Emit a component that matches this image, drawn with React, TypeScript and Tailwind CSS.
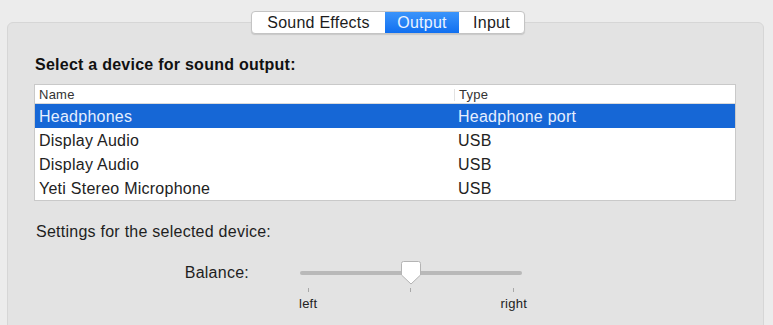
import React from "react";

const devices = [
  { name: "Headphones", type: "Headphone port", selected: true },
  { name: "Display Audio", type: "USB" },
  { name: "Display Audio", type: "USB" },
  { name: "Yeti Stereo Microphone", type: "USB" },
];

export default function App() {
  return (
    <div
      className="relative h-[325px] w-[773px] overflow-hidden bg-[#ececec] px-[7px] pt-[22px] tracking-[0.25px] text-[#222]"
      style={{ fontFamily: '"Liberation Sans", Arial, sans-serif' }}
    >
      {/* tab bar */}
      <div className="absolute left-[251px] top-[11px] z-10 flex h-[23px] overflow-hidden rounded-[4px] border border-[#c4c4c4] bg-white text-[16px] leading-[21px] shadow-[0_1px_1px_rgba(0,0,0,0.12)]">
        <div className="flex w-[133px] items-center justify-center text-[#1c1c1c]">Sound Effects</div>
        <div className="flex w-[74px] items-center justify-center bg-gradient-to-b from-[#3a94fb] to-[#0f6ff0] text-[#eaf3ff]">
          Output
        </div>
        <div className="flex w-[65px] items-center justify-center text-[#1c1c1c]">Input</div>
      </div>

      {/* panel */}
      <div className="h-[320px] w-[757px] rounded-[6px] border border-[#d6d6d6] bg-[#e3e3e3] pt-[33px]">
        <div className="pl-[27px] text-[16px] font-bold leading-[18px] text-[#111]">
          Select a device for sound output:
        </div>

        <div className="ml-[26px] mt-[10px] w-[702px] border border-[#c9c9c9] bg-white">
          <div className="flex h-[19px] items-center border-b border-[#dadada] pt-[2px] text-[13px] text-[#333]">
            <div className="w-[419px] pl-[4px]">Name</div>
            <div className="h-[12px] w-px bg-[#e2e2e2]" />
            <div className="pl-[4px]">Type</div>
          </div>
          {devices.map((d, i) => (
            <div
              key={i}
              className={
                "flex h-[24px] items-center pt-[2px] text-[16px] " +
                (d.selected ? "bg-[#1667d6] text-[#e6efff]" : "text-[#222]")
              }
            >
              <div className="w-[420px] pl-[4px]">{d.name}</div>
              <div className="pl-[3px]">{d.type}</div>
            </div>
          ))}
        </div>

        <div className="mt-[22px] pl-[28px] text-[16px] leading-[18px] text-[#1e1e1e]">
          Settings for the selected device:
        </div>

        <div className="mt-[23px] flex items-start">
          <div className="w-[241px] text-right text-[16px] leading-[18px] text-[#1e1e1e]">Balance:</div>
          <div className="ml-[51px] w-[222px]">
            <div className="relative h-[18px]">
              <div className="absolute left-0 right-0 top-[7px] h-[4px] rounded-full bg-[#b9b9b9]" />
              <svg
                className="absolute left-[101px] top-[-3px]"
                width="20"
                height="24"
                viewBox="0 0 20 24"
              >
                <path
                  d="M2.5 0.5 H17.5 A2 2 0 0 1 19.5 2.5 V14 L10 23 L0.5 14 V2.5 A2 2 0 0 1 2.5 0.5 Z"
                  fill="#ffffff"
                  stroke="#b4b4b4"
                />
              </svg>
            </div>
            <div className="relative mt-[6px] h-[4px]">
              <div className="absolute left-[8px] top-0 h-[4px] w-px bg-[#a8a8a8]" />
              <div className="absolute left-[110px] top-0 h-[4px] w-px bg-[#a8a8a8]" />
              <div className="absolute left-[213px] top-0 h-[4px] w-px bg-[#a8a8a8]" />
            </div>
            <div className="mt-[4px] flex justify-between text-[13px] leading-[15px] text-[#222]">
              <span className="ml-[-1px]">left</span>
              <span className="mr-[-5px]">right</span>
            </div>
          </div>
        </div>
      </div>
    </div>
  );
}
